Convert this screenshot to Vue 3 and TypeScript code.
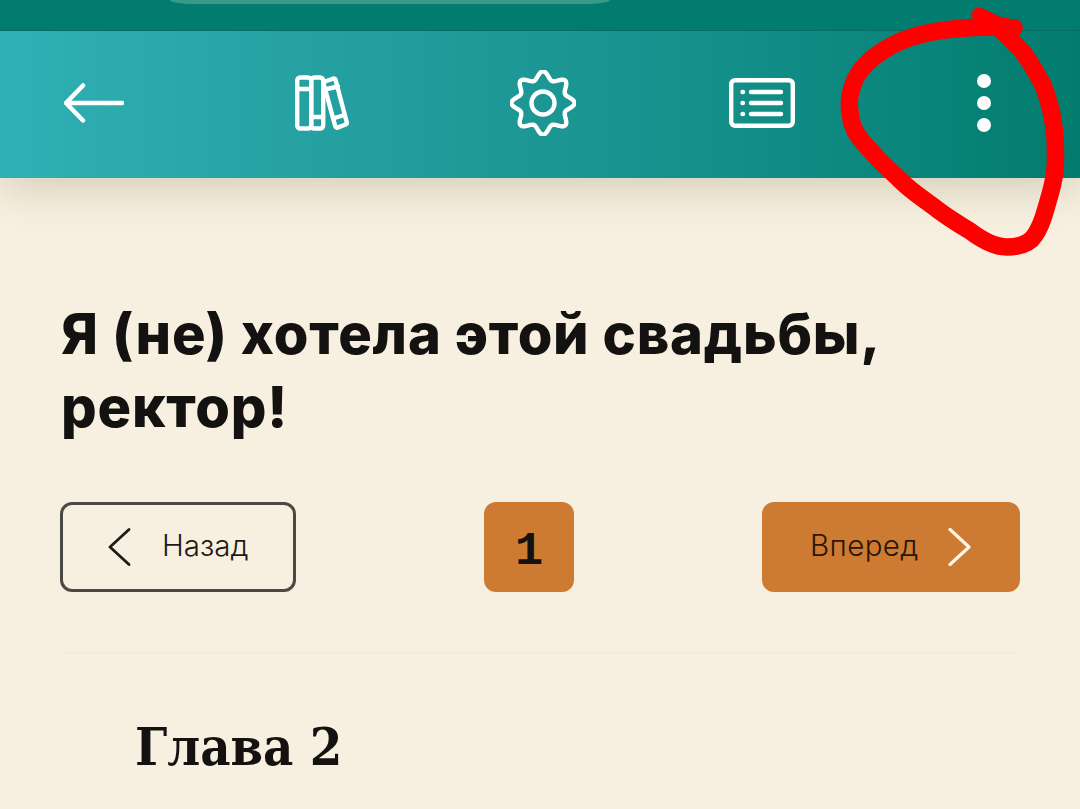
<script setup lang="ts">
const gearPath = (() => {
  const pts: string[] = [];
  const n = 160;
  for (let i = 0; i < n; i++) {
    const t = (i / n) * Math.PI * 2;
    const r = 27.4 + 3.9 * Math.cos(8 * t) + 0.3 * Math.cos(16 * t);
    const x = 33 + r * Math.sin(t);
    const y = 33 - r * Math.cos(t);
    pts.push(`${x.toFixed(2)} ${y.toFixed(2)}`);
  }
  return `M${pts.join("L")}Z`;
})();
</script>

<template>
  <div class="page">
    <header class="header">
      <div class="status"><div class="pill"></div></div>
      <nav class="toolbar">
        <button class="tool" aria-label="Назад">
          <svg width="60" height="40" viewBox="0 0 60 40" fill="none" stroke="#fff" stroke-width="4.500" stroke-linecap="round" stroke-linejoin="round">
            <path d="M19 2.500 2 20 19 37.500M2 20H58" />
          </svg>
        </button>
        <button class="tool" aria-label="Библиотека">
          <svg width="54" height="56" viewBox="0 0 54 56" fill="none" stroke="#fff" stroke-width="4.400" stroke-linecap="round" stroke-linejoin="round">
            <rect x="2.200" y="2.500" width="14" height="51" rx="3" />
            <rect x="16.200" y="2.500" width="12" height="51" rx="3" />
            <path d="M2 14H16M16 42H28" />
            <path d="M30 6.500 38.500 3.500Q40 3.200 40.500 4.600L51.800 47.500Q52.100 49 50.700 49.500L42.500 52.600Q40.800 53 40.300 51.400L28.600 8.500Q28.600 7 30 6.500Z" />
            <path d="M32 14 43 11.500M39.500 43 49.500 40" />
          </svg>
        </button>
        <button class="tool" aria-label="Настройки">
          <svg width="66" height="66" viewBox="0 0 66 66" fill="none" stroke="#fff" stroke-width="4.400" stroke-linejoin="round">
            <path :d="gearPath" />
            <circle cx="33" cy="33" r="11.500" />
          </svg>
        </button>
        <button class="tool" aria-label="Содержание">
          <svg width="66" height="50" viewBox="0 0 66 50" fill="none" stroke="#fff" stroke-width="4.400" stroke-linecap="round">
            <rect x="2.200" y="2.200" width="61.600" height="45.600" rx="4" />
            <path d="M22 14H52M22 25H52M22 36H52" />
            <path d="M13.500 14H14M13.500 25H14M13.500 36H14" />
          </svg>
        </button>
        <button class="tool" aria-label="Ещё">
          <span class="dots"><i></i><i></i><i></i></span>
        </button>
      </nav>
    </header>

    <main class="content">
      <h1 class="title">Я (не) хотела этой свадьбы,<br />ректор!</h1>
      <div class="pager">
        <button class="btn btn-back">
          <svg width="24" height="38" viewBox="0 0 24 38" fill="none" stroke="#1d1a17" stroke-width="2.800" stroke-linecap="round" stroke-linejoin="round">
            <path d="M21 1.500 2 19 21 36.500" />
          </svg>
          <span>Назад</span>
        </button>
        <div class="page-no">1</div>
        <button class="btn btn-next">
          <span>Вперед</span>
          <svg width="24" height="38" viewBox="0 0 24 38" fill="none" stroke="#fff6e6" stroke-width="3.200" stroke-linecap="round" stroke-linejoin="round">
            <path d="M3 1.500 22 19 3 36.500" />
          </svg>
        </button>
      </div>
      <hr class="rule" />
      <h2 class="chapter">Глава 2</h2>
    </main>

    <svg class="scribble" width="1080" height="809" viewBox="0 0 1080 809" fill="none" stroke="#fe0000" stroke-linecap="round" stroke-linejoin="round">
      <path stroke-width="17.500" d="M1014 28C990 26 950 27 919 35C895 41 870 56 858 74C850 88 848 100 850 112C851 128 858 138 872 152C880 162 890 170 900 180C912 192 925 200 938 210C950 219 960 225 970 231C982 240 995 247 1007 247C1022 247 1030 243 1035 235C1042 225 1044 215 1047 205C1051 192 1054 182 1055 170C1056 155 1056 143 1054 127C1052 112 1048 98 1043 85C1037 74 1032 65 1025 55C1018 46 1008 37 1001 30" />
      <path stroke-width="15" d="M979 15 998 24 1014 27" />
    </svg>
  </div>
</template>

<style>
html, body { margin: 0; background: #f7f0e0; }
</style>

<style scoped>
.page {
  position: relative;
  width: 1080px;
  height: 809px;
  overflow: hidden;
  background: #f7f0e0;
}
.header { box-shadow: 0 8px 44px rgba(70, 50, 10, 0.2); position: relative; }
.status {
  height: 30px;
  background: #027c6e;
  border-bottom: 1px solid #056e60;
  display: flex;
  justify-content: flex-start;
  padding-left: 170px;
}
.pill {
  width: 440px;
  height: 4px;
  background: #3a9a87;
  border-radius: 0 0 24px 24px / 0 0 4px 4px;
}
.toolbar {
  height: 147px;
  box-sizing: border-box;
  padding-left: 64px;
  padding-bottom: 3px;
  display: grid;
  grid-template-columns: 231px 215px 219px 248px auto;
  align-items: center;
  justify-items: start;
  background: linear-gradient(90deg, #30b0b5 0%, #229c9c 38%, #14908a 66%, #017c6d 100%);
}
.tool {
  display: flex;
  padding: 0;
  border: 0;
  background: none;
}
.dots { display: flex; flex-direction: column; gap: 8px; }
.dots i { display: block; width: 14px; height: 14px; border-radius: 50%; background: #fff; }

.content { padding: 0 60px; }
.title {
  margin: 120px 0 0 1px;
  font: 800 56px/73px "Inter", "Lato", sans-serif;
  letter-spacing: 0.8px;
  color: #141211;
}
.pager {
  margin-top: 58px;
  display: flex;
  justify-content: space-between;
  align-items: stretch;
  height: 90px;
}
.btn {
  display: flex;
  align-items: center;
  box-sizing: border-box;
  border-radius: 12px;
  font: 300 29.500px "Inter", "Lato", sans-serif;
  color: #1c1917;
  padding: 0 0 4px;
}
.btn svg { margin-top: 4px; }
.btn-back {
  width: 236px;
  border: 3px solid #4c4945;
  background: none;
  padding-left: 45px;
  gap: 30px;
}
.btn-next {
  width: 258px;
  border: 0;
  background: #cd7a32;
  color: #2a1508;
  padding-left: 48px;
  gap: 28px;
}
.btn-next span { letter-spacing: 0.4px; }
.page-no {
  width: 90px;
  box-sizing: border-box;
  padding-top: 8px;
  border-radius: 12px;
  background: #cd7a32;
  display: flex;
  align-items: center;
  justify-content: center;
  font: 700 47px "Liberation Mono", monospace;
  color: #141211;
}
.rule {
  margin: 60px 0 0;
  height: 2px;
  border: 0;
  background: #f1ece3;
}
.chapter {
  margin: 56px 0 0 75px;
  font: 700 52px/74px "DejaVu Serif Condensed", "DejaVu Serif", serif;
  color: #141211;
}
.scribble {
  position: absolute;
  left: 0;
  top: 0;
  pointer-events: none;
}
</style>
